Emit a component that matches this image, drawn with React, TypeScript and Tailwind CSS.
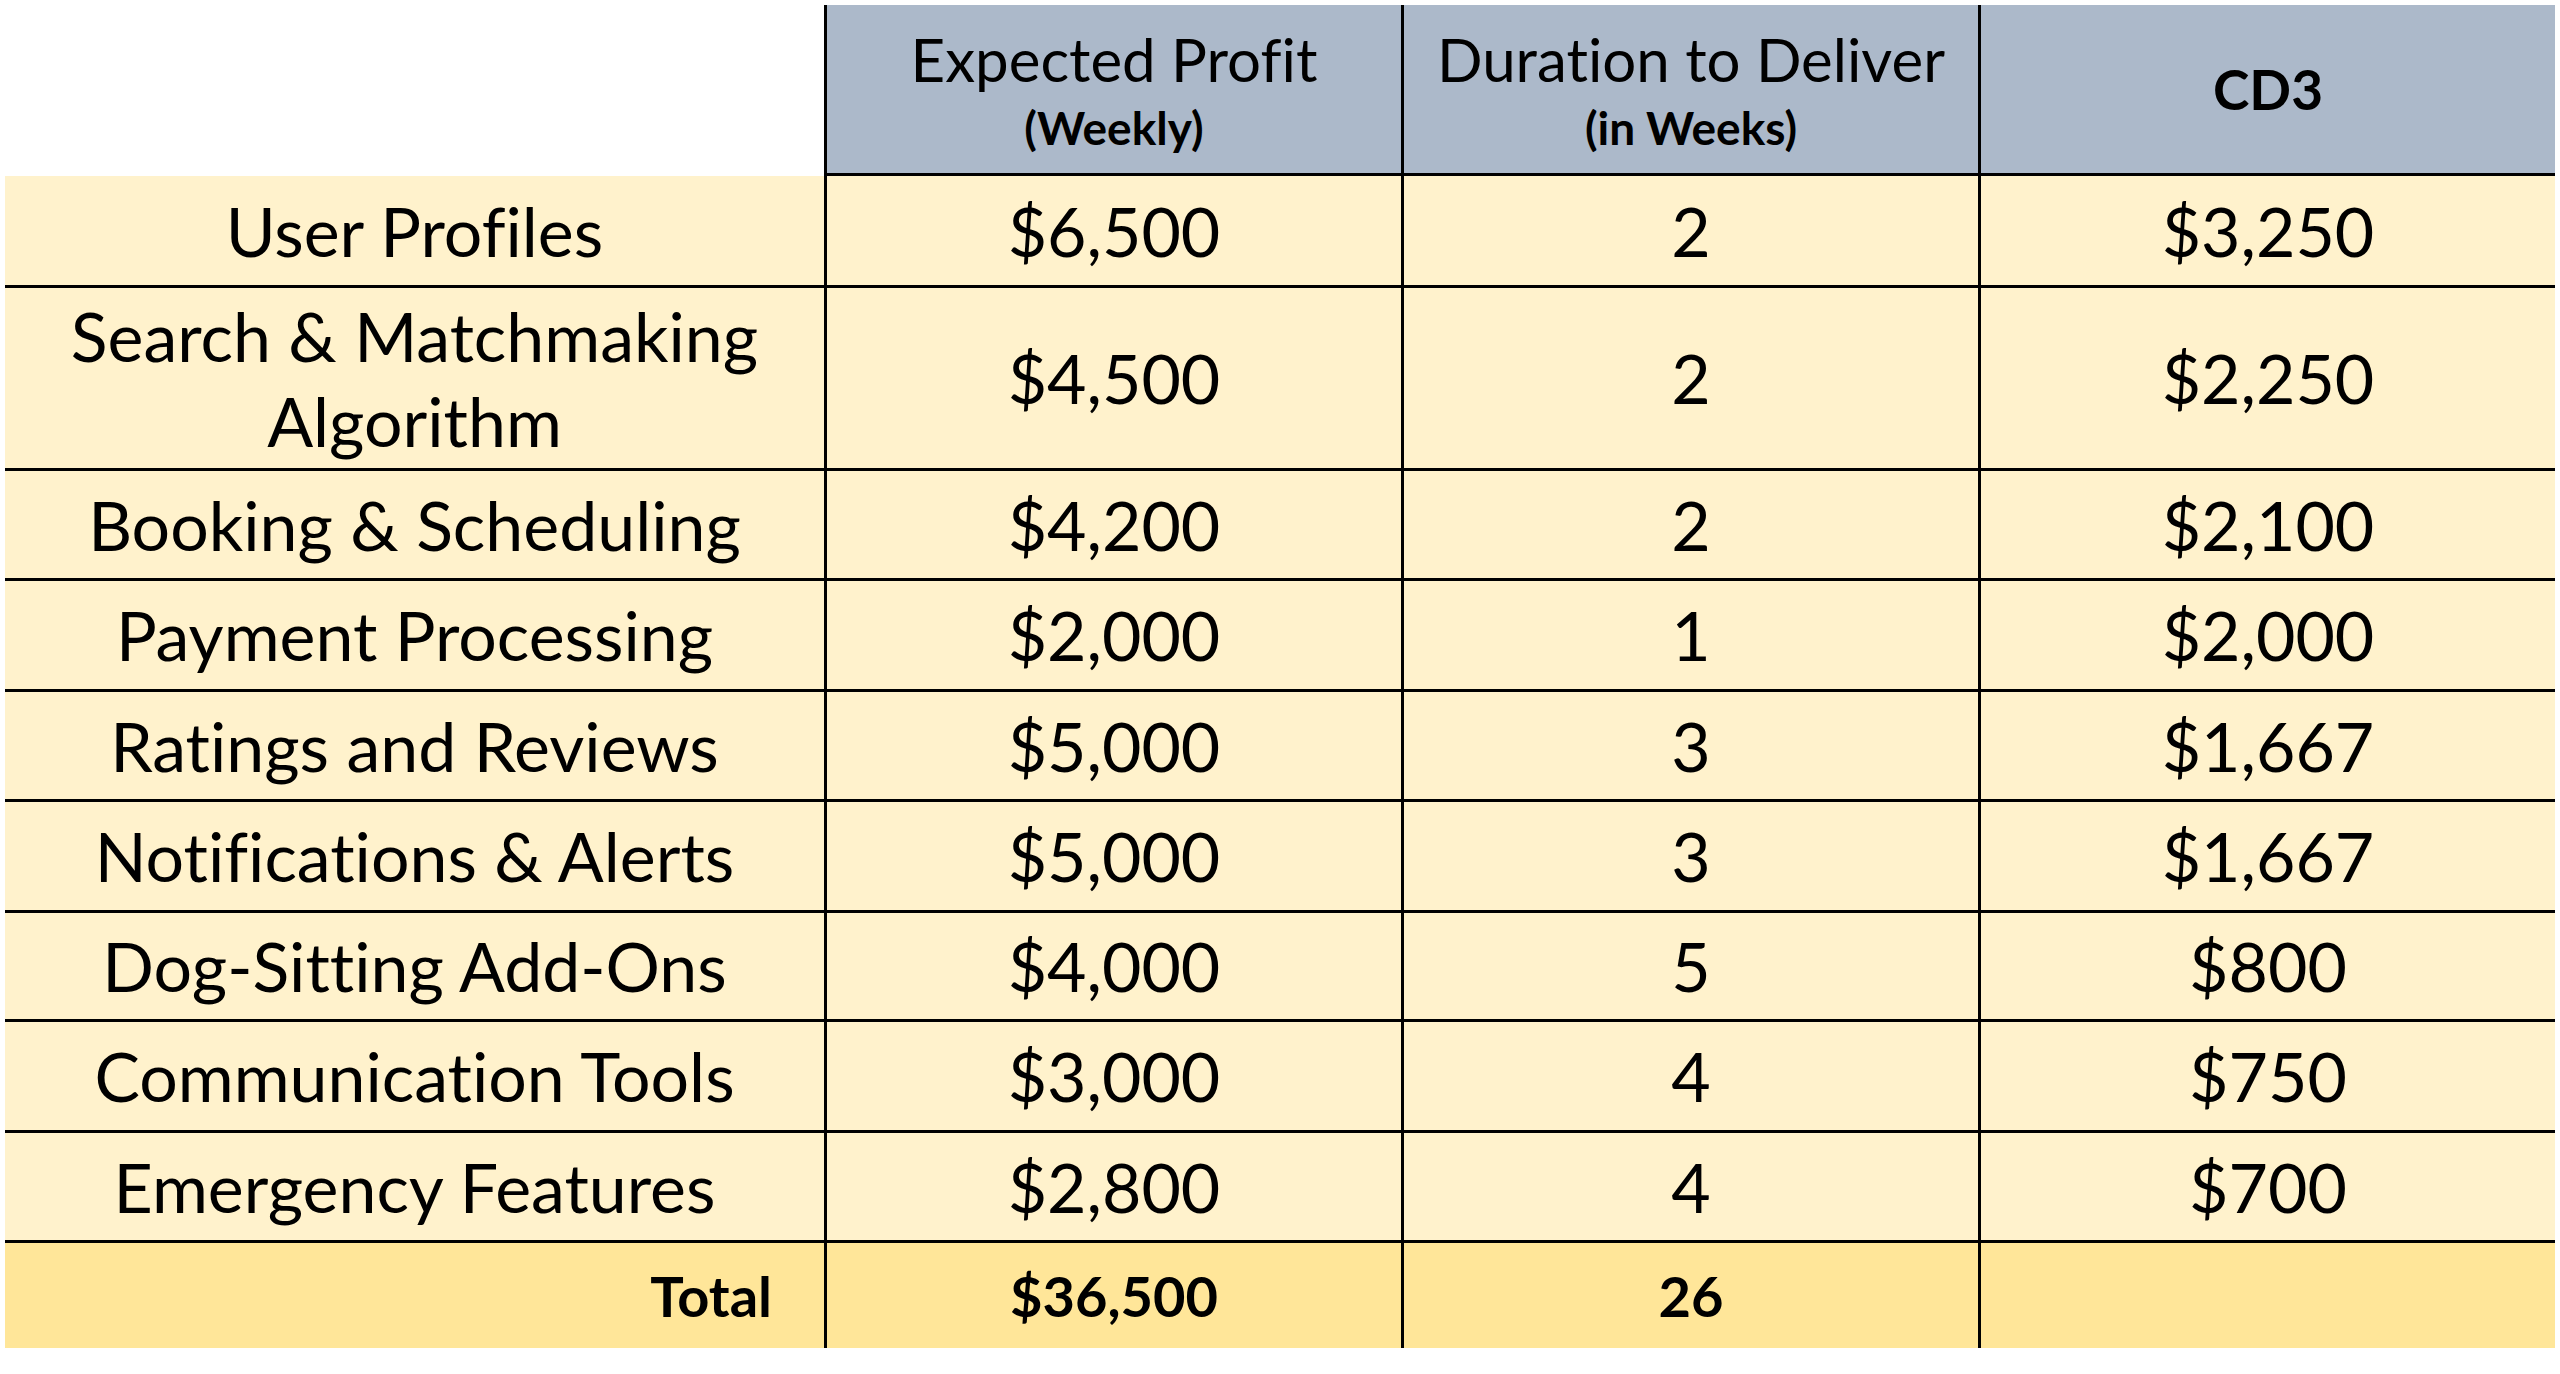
import React from "react";

type Row = { name: string[]; profit: string; dur: string; cd3: string; h: string };

const rows: Row[] = [
  { name: ["User Profiles"], profit: "$6,500", dur: "2", cd3: "$3,250", h: "h-[112px]" },
  { name: ["Search & Matchmaking", "Algorithm"], profit: "$4,500", dur: "2", cd3: "$2,250", h: "h-[183px]" },
  { name: ["Booking & Scheduling"], profit: "$4,200", dur: "2", cd3: "$2,100", h: "h-[110px]" },
  { name: ["Payment Processing"], profit: "$2,000", dur: "1", cd3: "$2,000", h: "h-[111px]" },
  { name: ["Ratings and Reviews"], profit: "$5,000", dur: "3", cd3: "$1,667", h: "h-[110px]" },
  { name: ["Notifications & Alerts"], profit: "$5,000", dur: "3", cd3: "$1,667", h: "h-[111px]" },
  { name: ["Dog-Sitting Add-Ons"], profit: "$4,000", dur: "5", cd3: "$800", h: "h-[109px]" },
  { name: ["Communication Tools"], profit: "$3,000", dur: "4", cd3: "$750", h: "h-[111px]" },
  { name: ["Emergency Features"], profit: "$2,800", dur: "4", cd3: "$700", h: "h-[110px]" },
];

export default function App() {
  return (
    <div className="w-[2560px] h-[1374px] bg-white pt-[5px] pl-[5px] text-black font-[Lato,sans-serif] [font-variant-ligatures:none] overflow-hidden">
      {/* Header */}
      <div className="flex h-[168px]">
        <div className="w-[819px] shrink-0" />
        <div className="w-[577px] shrink-0 border-l-[3px] border-black bg-[#ACB9CA] flex flex-col items-center pt-[20px]">
          <div className="text-[60px] leading-[68px]">Expected Profit</div>
          <div className="text-[46px] leading-[48px] font-bold mt-[11px]">(Weekly)</div>
        </div>
        <div className="w-[577px] shrink-0 border-l-[3px] border-black bg-[#ACB9CA] flex flex-col items-center pt-[20px]">
          <div className="text-[60px] leading-[68px]">Duration to Deliver</div>
          <div className="text-[46px] leading-[48px] font-bold mt-[11px]">(in Weeks)</div>
        </div>
        <div className="w-[577px] shrink-0 border-l-[3px] border-black bg-[#ACB9CA] flex items-center justify-center">
          <div className="text-[55px] leading-none font-bold">CD3</div>
        </div>
      </div>

      {/* Data rows */}
      {rows.map((r, i) => (
        <div key={i} className={`flex ${r.h}`}>
          <div
            className={
              i === 0
                ? "w-[819px] shrink-0 border-t-[3px] border-transparent bg-clip-padding bg-[#FFF2CC] flex flex-col items-center justify-center text-[68px]"
                : "w-[819px] shrink-0 border-t-[3px] border-black bg-[#FFF2CC] flex flex-col items-center justify-center text-[68px]"
            }
          >
            {r.name.map((n, j) => (
              <div key={j} className={r.name.length > 1 ? "leading-[85px]" : "leading-none"}>
                {n}
              </div>
            ))}
          </div>
          <div className="w-[577px] shrink-0 border-t-[3px] border-l-[3px] border-black bg-[#FFF2CC] flex items-center justify-center text-[68px] leading-none">
            {r.profit}
          </div>
          <div className="w-[577px] shrink-0 border-t-[3px] border-l-[3px] border-black bg-[#FFF2CC] flex items-center justify-center text-[68px] leading-none">
            {r.dur}
          </div>
          <div className="w-[577px] shrink-0 border-t-[3px] border-l-[3px] border-black bg-[#FFF2CC] flex items-center justify-center text-[68px] leading-none">
            {r.cd3}
          </div>
        </div>
      ))}

      {/* Total row */}
      <div className="flex h-[108px] font-bold text-[56px] leading-none">
        <div className="w-[819px] shrink-0 border-t-[3px] border-black bg-[#FFE699] flex items-center justify-end pr-[52px]">
          Total
        </div>
        <div className="w-[577px] shrink-0 border-t-[3px] border-l-[3px] border-black bg-[#FFE699] flex items-center justify-center">
          $36,500
        </div>
        <div className="w-[577px] shrink-0 border-t-[3px] border-l-[3px] border-black bg-[#FFE699] flex items-center justify-center">
          26
        </div>
        <div className="w-[577px] shrink-0 border-t-[3px] border-l-[3px] border-black bg-[#FFE699]" />
      </div>
    </div>
  );
}
